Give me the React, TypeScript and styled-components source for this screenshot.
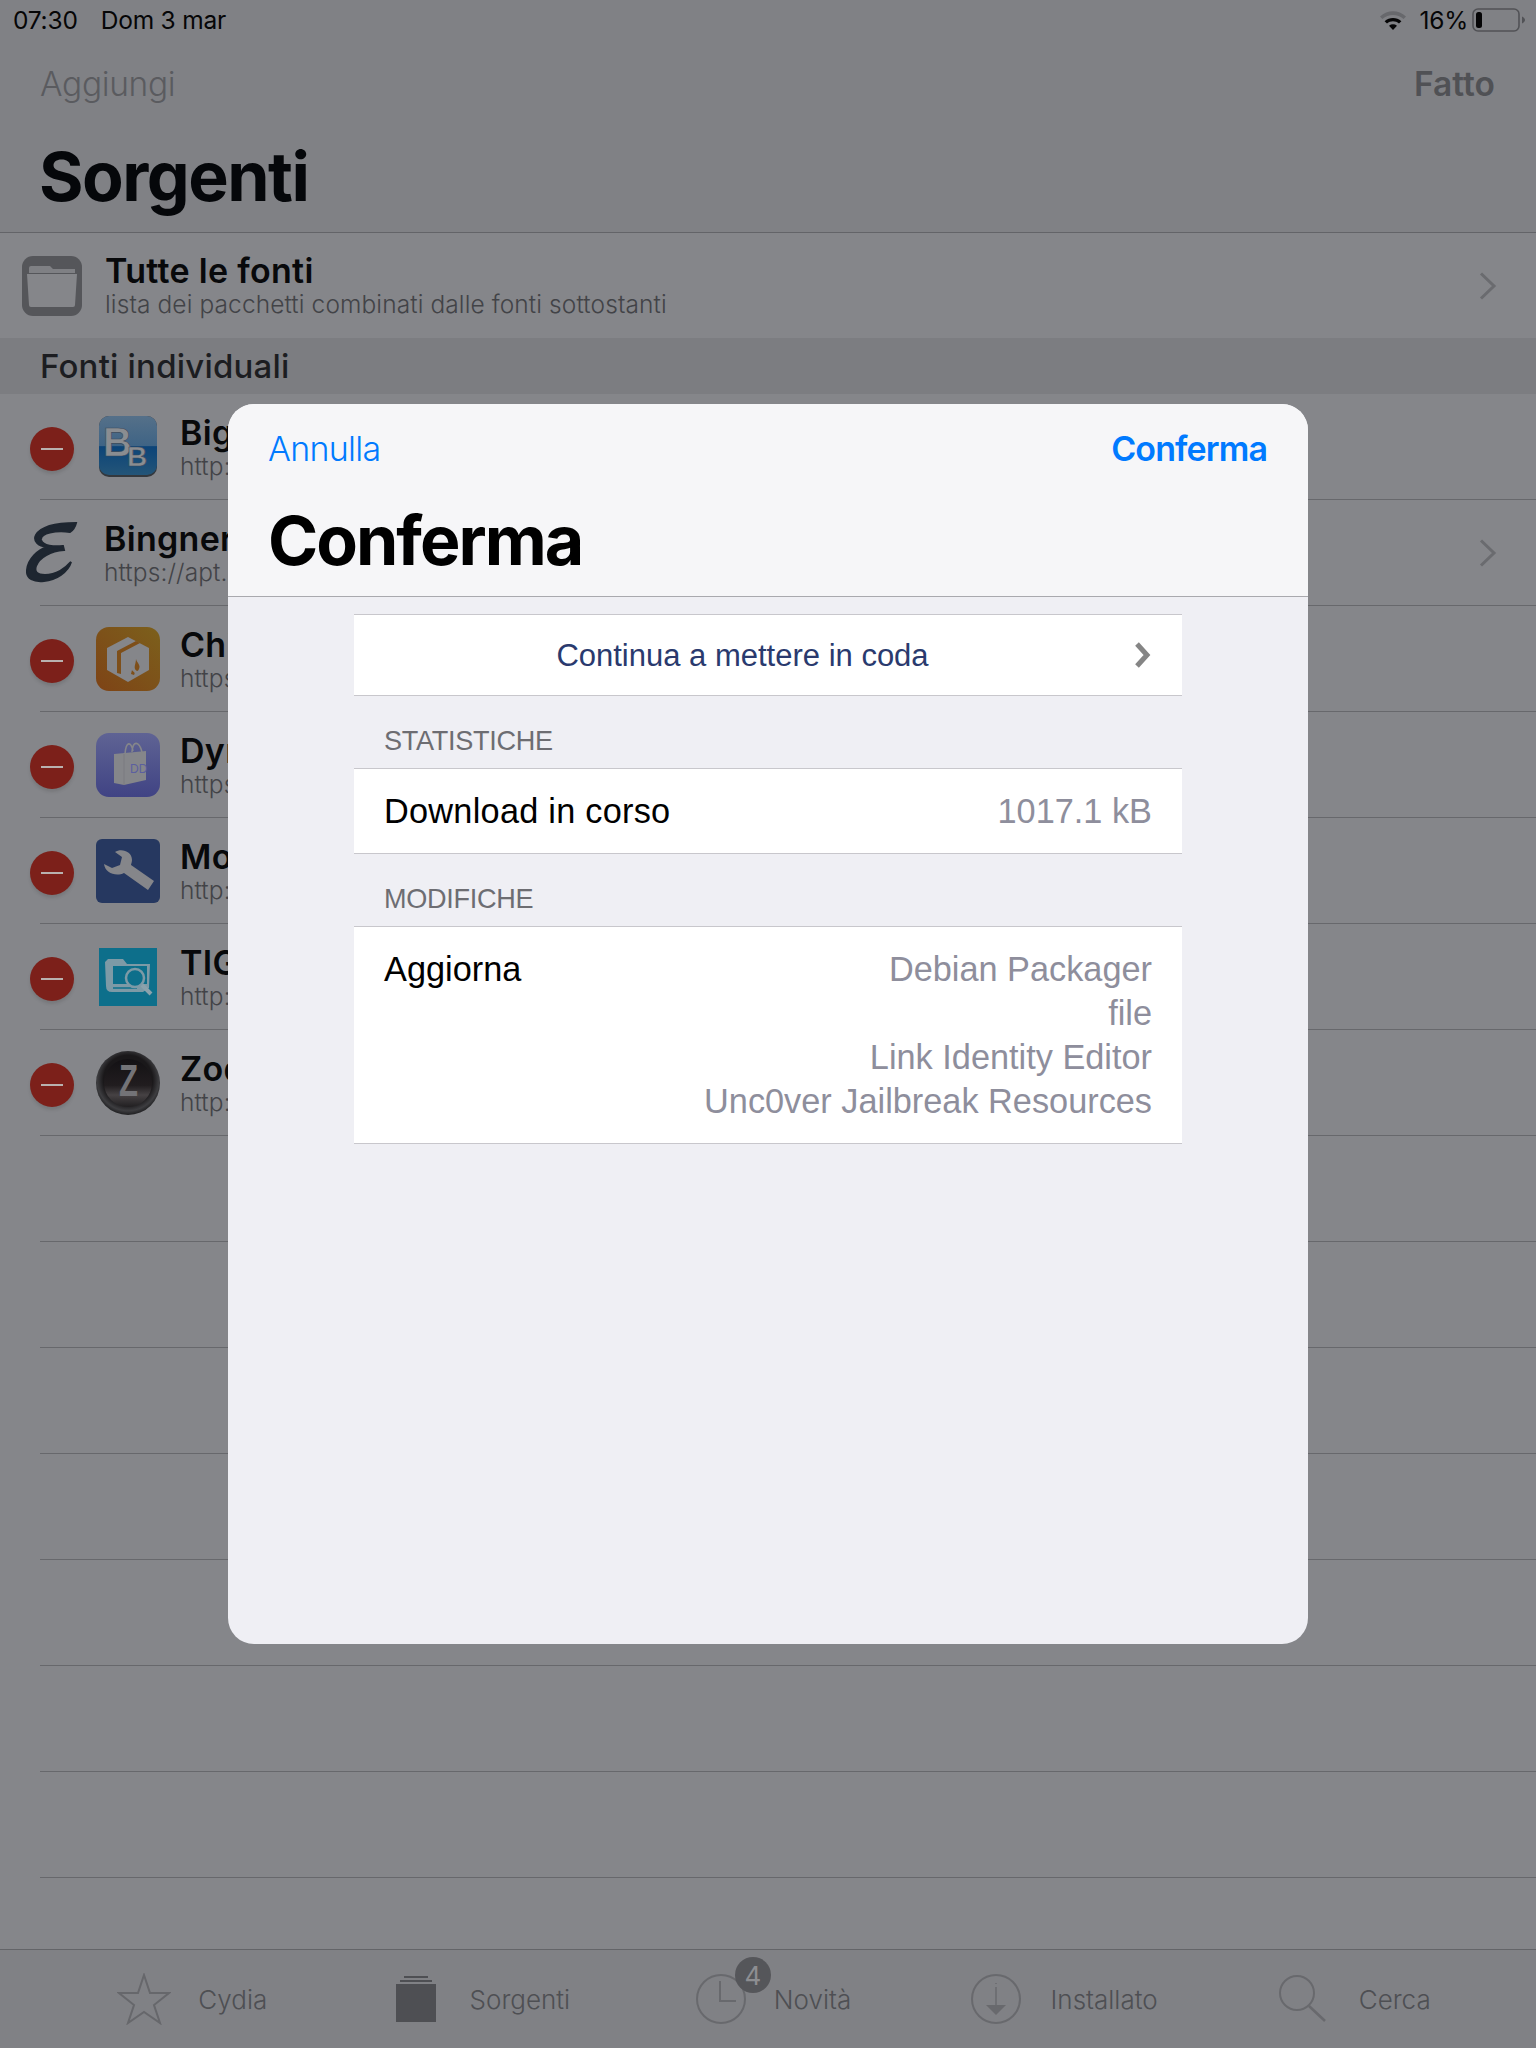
import React from 'react';
import styled, { createGlobalStyle } from 'styled-components';

const GlobalStyle = createGlobalStyle`
  html, body { margin: 0; padding: 0; background: #848589; }
  * { box-sizing: border-box; }
`;

const Page = styled.div`
  position: relative;
  width: 1536px;
  height: 2048px;
  overflow: hidden;
  display: flex;
  flex-direction: column;
  background: #85868a;
  font-family: Inter, "Liberation Sans", sans-serif;
`;

/* status bar + nav */
const TopBar = styled.header`
  height: 233px;
  flex: none;
  background: #808185;
  border-bottom: 1px solid #636468;
`;

const StatusBar = styled.div`
  height: 40px;
  padding: 0 10px 0 13px;
  display: flex;
  align-items: center;
  color: #060607;
  font-size: 24.5px;
  letter-spacing: -0.2px;
`;

const StatusDate = styled.span`
  margin-left: 23px;
`;

const StatusRight = styled.div`
  margin-left: auto;
  display: flex;
  align-items: center;
`;

const Percent = styled.span`
  margin: 0 4px 0 12px;
`;

const NavRow = styled.div`
  height: 88px;
  padding: 0 41px 0 40px;
  display: flex;
  align-items: center;
  justify-content: space-between;
  font-size: 33.5px;
`;

const NavAdd = styled.span`
  color: #5a5b5f;
  font-weight: 300;
  letter-spacing: -0.35px;
`;

const NavDone = styled.span`
  color: #505155;
  font-weight: 600;
`;

const PageTitle = styled.h1`
  margin: 10px 0 0 39px;
  font-size: 68px;
  line-height: 76px;
  font-weight: 700;
  letter-spacing: -1.5px;
  color: #05070a;
`;

const AllRow = styled.div`
  height: 105px;
  flex: none;
  padding: 0 40px 0 22px;
  display: flex;
  align-items: center;
  color: #08090b;
`;

const RowText = styled.div`
  flex: 1;
  min-width: 0;
  white-space: nowrap;
`;

const RowTitle = styled.div`
  font-size: 34px;
  line-height: 38px;
  font-weight: 600;
  letter-spacing: 0.3px;
  color: #08090b;
`;

const RowSub = styled.div`
  font-size: 24.5px;
  line-height: 29px;
  font-weight: 300;
  color: #424347;
  letter-spacing: 0.1px;
`;

const SectionHead = styled.div`
  height: 56px;
  flex: none;
  padding-left: 40px;
  display: flex;
  align-items: center;
  background: #7c7d81;
  color: #1c1d21;
  font-size: 33px;
  font-weight: 500;
  letter-spacing: 0.2px;
`;

const SourceList = styled.div`
  flex: 1;
  min-height: 0;
  overflow: hidden;
`;

const Row = styled.div`
  height: 106px;
  padding: 0 40px 0 30px;
  display: flex;
  align-items: center;
  background: linear-gradient(#67686c, #67686c) no-repeat 40px 100% / 100% 1px;
`;

const PlainRow = styled(Row)`
  padding-left: 26px;
`;

const DeleteDot = styled.span`
  width: 44px;
  height: 44px;
  flex: none;
  margin: 4px 22px 0 0;
  border-radius: 50%;
  background: #7c201a;
  box-shadow: 0 3px 3px rgba(60, 60, 60, 0.18);
  display: flex;
  align-items: center;
  justify-content: center;

  &::before {
    content: '';
    width: 22px;
    height: 2px;
    background: #b9b1af;
  }
`;

const IconSlot = styled.span`
  width: 64px;
  height: 64px;
  flex: none;
  margin-right: 20px;
  display: flex;
  align-items: center;
  justify-content: center;
`;

const LogoSlot = styled.span`
  width: 52px;
  height: 62px;
  flex: none;
  margin-right: 26px;
  display: flex;
  align-items: center;
`;

const Chevron = styled.svg`
  width: 18px;
  height: 28px;
  flex: none;
  margin-right: -1px;
`;

/* tab bar */
const TabBar = styled.nav`
  height: 99px;
  flex: none;
  padding: 0 36px 0 47px;
  display: grid;
  grid-template-columns: repeat(5, 1fr);
  background: #808185;
  border-top: 1px solid #636468;
`;

const TabItem = styled.div<{ $gap: number }>`
  position: relative;
  display: flex;
  align-items: center;
  justify-content: center;
  gap: ${p => p.$gap}px;
  color: #4e4f53;
  font-size: 26px;
  font-weight: 300;
`;

const ClockWrap = styled.span`
  position: relative;
  display: flex;
`;

const TabBadge = styled.span`
  position: absolute;
  top: -17px;
  right: -25px;
  width: 36px;
  height: 36px;
  border-radius: 50%;
  background: #55565a;
  color: #8d8e92;
  font-size: 26px;
  font-weight: 400;
  display: flex;
  align-items: center;
  justify-content: center;
`;

/* modal */
const Sheet = styled.section`
  position: absolute;
  top: 404px;
  left: 228px;
  width: 1080px;
  height: 1240px;
  border-radius: 26px;
  overflow: hidden;
  display: flex;
  flex-direction: column;
  background: #efeff4;
`;

const SheetHead = styled.header`
  height: 193px;
  flex: none;
  padding: 0 41px 0 40px;
  background: #f6f6f8;
  border-bottom: 1px solid #a9a9ae;
`;

const SheetActions = styled.div`
  height: 88px;
  display: flex;
  align-items: center;
  justify-content: space-between;
  font-size: 34px;
  color: #007aff;
`;

const Cancel = styled.span`
  font-weight: 300;
  letter-spacing: -0.7px;
`;

const Confirm = styled.span`
  font-weight: 600;
  letter-spacing: -0.9px;
`;

const SheetTitle = styled.h2`
  margin: 10px 0 0;
  font-size: 68px;
  line-height: 76px;
  font-weight: 700;
  letter-spacing: -2px;
  color: #000;
`;

const SheetBody = styled.div`
  flex: 1;
  padding: 17px 126px 0;
  font-family: "Liberation Sans", Arial, sans-serif;
`;

const Card = styled.div<{ $height: number }>`
  height: ${p => p.$height}px;
  padding: 0 30px;
  display: flex;
  background: #fff;
  border-top: 1px solid #c8c7cc;
  border-bottom: 1px solid #c8c7cc;
  font-size: 34.3px;
  color: #000;
`;

const QueueCard = styled(Card)`
  position: relative;
  align-items: center;
  justify-content: center;
  padding-top: 2px;
  padding-right: 81px;
  font-size: 31px;
  color: #2a3a6e;
`;

const QueueChevron = styled.svg`
  position: absolute;
  right: 30px;
  top: 26px;
  width: 18px;
  height: 28px;
`;

const InfoCard = styled(Card)`
  align-items: center;
  justify-content: space-between;
`;

const InfoLabel = styled.span`
  letter-spacing: 0.25px;
`;

const ChangesCard = styled(Card)`
  justify-content: space-between;
  padding-top: 20px;
`;

const ChangeLabel = styled.span`
  line-height: 44px;
`;

const Muted = styled.span`
  color: #8e8e9c;
`;

const ChangeList = styled.div`
  display: flex;
  flex-direction: column;
  align-items: flex-end;
  line-height: 44px;
  color: #8e8e9c;
`;

const GroupLabel = styled.div<{ $top: number }>`
  height: 27px;
  margin: ${p => p.$top}px 0 14px 30px;
  display: flex;
  align-items: center;
  font-size: 27.1px;
  letter-spacing: -0.3px;
  color: #6d6d72;
`;

const ArrowRight = () => (
  <Chevron viewBox="0 0 18 28">
    <path d="M2 1.5 L15 14 L2 26.5" fill="none" stroke="#6a6b6f" strokeWidth="3" />
  </Chevron>
);

const WifiIcon = () => (
  <svg width="28" height="22" viewBox="0 0 28 22">
    <path d="M1 7.5 C8.5 0.5 19.5 0.5 27 7.5 L24.6 10 C18.5 4.6 9.5 4.6 3.4 10 Z" fill="#67686c" />
    <path d="M5.6 12.2 C10.4 7.8 17.6 7.8 22.4 12.2 L20 14.6 C16.6 11.6 11.4 11.6 8 14.6 Z" fill="#050506" />
    <path d="M10 16.7 C12.4 14.8 15.6 14.8 18 16.7 L14 21 Z" fill="#050506" />
  </svg>
);

const BatteryIcon = () => (
  <svg width="54" height="26" viewBox="0 0 54 26">
    <rect x="1" y="2" width="46" height="22" rx="5" fill="none" stroke="#515256" strokeWidth="1.6" />
    <rect x="4" y="5" width="6" height="16" rx="2.5" fill="#050506" />
    <path d="M50 9.5 C52 10.5 53 11.8 53 13 C53 14.2 52 15.5 50 16.5 Z" fill="#515256" />
  </svg>
);

const FolderIcon = () => (
  <svg width="60" height="60" viewBox="0 0 60 60" style={{ marginRight: 23, flex: 'none' }}>
    <rect width="60" height="60" rx="11" fill="#55565a" />
    <path d="M7 12 Q7 10 9 10 H28 L31 13 H53 V17 H7 Z" fill="#7f8084" />
    <path d="M5 18 H55 L53 49 Q53 51 51 51 H9 Q7 51 7 49 Z" fill="#85868a" />
  </svg>
);

const BigBossIcon = () => (
  <svg width="58" height="62" viewBox="0 0 58 62">
    <defs>
      <linearGradient id="bbTop" x1="0" y1="0" x2="0" y2="1">
        <stop offset="0" stopColor="#557089" />
        <stop offset="0.5" stopColor="#3f6485" />
        <stop offset="0.52" stopColor="#0c4478" />
        <stop offset="1" stopColor="#245578" />
      </linearGradient>
    </defs>
    <rect width="58" height="61" rx="10" fill="#34383d" />
    <rect width="58" height="59" rx="10" fill="url(#bbTop)" />
    <text x="4" y="40" fontFamily="Liberation Sans" fontWeight="700" fontSize="40" fill="#8a8d91" stroke="#3a4a5c" strokeWidth="0.6">B</text>
    <text x="28" y="50" fontFamily="Liberation Sans" fontWeight="700" fontSize="28" fill="#8a8d91" stroke="#3a4a5c" strokeWidth="0.6">B</text>
  </svg>
);

const ElucubratusLogo = () => (
  <svg width="52" height="62" viewBox="0 0 52 62">
    <path
      d="M50 1 C36 1 16 3 10 13 C7 19 12 24 21 25 C12 28 2 37 1 48 C0 57 8 60 18 59 C30 58 42 50 45 40 C40 46 30 53 19 53 C11 53 8 50 10 44 C13 35 25 29 38 28 L37 24 C28 25 17 24 15 18 C14 11 30 8 44 10 C47 8 49 5 50 1 Z"
      fill="#1e2630"
      stroke="#1e2630"
      strokeWidth="2"
    />
  </svg>
);

const ChimeraIcon = () => (
  <svg width="64" height="64" viewBox="0 0 64 64">
    <defs>
      <linearGradient id="chi" x1="0" y1="1" x2="1" y2="0">
        <stop offset="0" stopColor="#7e4316" />
        <stop offset="1" stopColor="#7c601c" />
      </linearGradient>
    </defs>
    <rect width="64" height="64" rx="13" fill="url(#chi)" />
    <path d="M32 10 L53 21 L53 43 L32 55 L11 43 L11 21 Z" fill="#85868a" />
    <path d="M21 46 L21 24 L40 14 L44 16 L25 26 L25 47 Z" fill="#7e4f1a" />
    <path d="M40 32 C41 36 45 38 43 42 C42 45 40 44 39 42 C38 39 40 36 40 32 Z M36 43 C37 45 40 45 38 48 L35 47 Z" fill="#7e4f1a" />
  </svg>
);

const DynasticIcon = () => (
  <svg width="64" height="64" viewBox="0 0 64 64">
    <defs>
      <linearGradient id="dyn" x1="0" y1="0" x2="0" y2="1">
        <stop offset="0" stopColor="#5f6394" />
        <stop offset="1" stopColor="#404384" />
      </linearGradient>
    </defs>
    <rect width="64" height="64" rx="13" fill="url(#dyn)" />
    <path d="M18 21 L50 18 L50 47 L28 52 L18 50 Z" fill="#85868a" />
    <path d="M28 21 V52" stroke="#7a7b80" strokeWidth="1" />
    <path d="M29 21 C30 8 35 8 37 18 M36 19 C37 7 43 8 46 19" fill="none" stroke="#85868a" strokeWidth="1.6" />
    <text x="34" y="40" fontFamily="Liberation Sans" fontSize="12" fill="#5b5fa0">DD</text>
  </svg>
);

const ModMyIcon = () => (
  <svg width="64" height="64" viewBox="0 0 64 64">
    <rect width="64" height="64" rx="6" fill="#263860" />
    <path
      d="M19 13 C25 9 36 12 36 21 C36 23 35 25 35 26 L58 42 L52 51 L28 34 C20 38 9 34 8 25 L16 29 L24 26 L26 18 Z"
      fill="#85868a"
    />
  </svg>
);

const TigiIcon = () => (
  <svg width="58" height="58" viewBox="0 0 58 58">
    <rect width="58" height="58" fill="#0d6f8b" />
    <path d="M6 14 L7 38 Q7 44 13 44 H44 L50 40 L51 16 H28 L24 11 H9 Z" fill="#7d9aa6" />
    <rect x="14" y="18" width="34" height="18" fill="#0d6f8b" />
    <path d="M14 40 H38" stroke="#0d6f8b" strokeWidth="1.5" />
    <circle cx="36" cy="30" r="9" fill="#0d6f8b" stroke="#7d9aa6" strokeWidth="2.5" />
    <path d="M43 37 L52 46" stroke="#8ba2ac" strokeWidth="4" />
  </svg>
);

const ZodIcon = () => (
  <svg width="64" height="64" viewBox="0 0 64 64">
    <defs>
      <radialGradient id="zodRing" cx="0.5" cy="0.45" r="0.55">
        <stop offset="0.7" stopColor="#1a181a" />
        <stop offset="0.88" stopColor="#3d3d40" />
        <stop offset="1" stopColor="#1f1f21" />
      </radialGradient>
      <linearGradient id="zodCore" x1="0" y1="0" x2="0" y2="1">
        <stop offset="0" stopColor="#131114" />
        <stop offset="0.55" stopColor="#211d1f" />
        <stop offset="0.75" stopColor="#464244" />
        <stop offset="1" stopColor="#211f21" />
      </linearGradient>
    </defs>
    <circle cx="32" cy="32" r="32" fill="url(#zodRing)" />
    <circle cx="32" cy="32" r="24" fill="url(#zodCore)" />
    <text
      x="23"
      y="45"
      fontFamily="Liberation Sans"
      fontWeight="700"
      fontSize="45"
      textLength="19"
      lengthAdjust="spacingAndGlyphs"
      fill="#737377"
    >
      Z
    </text>
  </svg>
);

const StarIcon = () => (
  <svg width="54" height="52" viewBox="0 0 54 52">
    <path d="M27 2 L33 20 L52 20 L37 32 L43 50 L27 39 L11 50 L17 32 L2 20 L21 20 Z" fill="none" stroke="#66676b" strokeWidth="2" />
  </svg>
);

const StackIcon = () => (
  <svg width="40" height="46" viewBox="0 0 40 46">
    <rect x="8" y="0" width="24" height="2" fill="#4e4f53" />
    <rect x="4" y="4" width="32" height="2" fill="#4e4f53" />
    <rect x="0" y="8" width="40" height="38" fill="#4e4f53" />
  </svg>
);

const ClockIcon = () => (
  <svg width="50" height="50" viewBox="0 0 50 50">
    <circle cx="25" cy="25" r="24" fill="none" stroke="#68696d" strokeWidth="2" />
    <path d="M24 7 V27 H40" fill="none" stroke="#68696d" strokeWidth="2" />
  </svg>
);

const InstalledIcon = () => (
  <svg width="50" height="50" viewBox="0 0 50 50">
    <circle cx="25" cy="25" r="24" fill="none" stroke="#68696d" strokeWidth="2" />
    <path d="M25 9 V10 M25 13 V32" stroke="#68696d" strokeWidth="1.5" />
    <path d="M15 31 H35 L25 41 Z" fill="#68696d" />
  </svg>
);

const SearchIcon = () => (
  <svg width="48" height="48" viewBox="0 0 48 48">
    <circle cx="18" cy="18" r="17" fill="none" stroke="#68696d" strokeWidth="2" />
    <path d="M30 31 L46 46" stroke="#68696d" strokeWidth="2.6" />
  </svg>
);

const sources = [
  { title: 'BigBoss', url: 'http://apt.thebigboss.org/repofiles/cydia/', icon: <BigBossIcon /> },
  { title: 'Chimera', url: 'https://repo.chariz.io/', icon: <ChimeraIcon /> },
  { title: 'Dynastic Repo', url: 'https://repo.dynastic.co/', icon: <DynasticIcon /> },
  { title: 'ModMyi', url: 'http://apt.modmyi.com/', icon: <ModMyIcon /> },
  { title: 'TIGI Software', url: 'http://tigisoftware.com/cydia/', icon: <TigiIcon /> },
  { title: 'ZodTTD & MacCiti', url: 'http://cydia.zodttd.com/repo/cydia/', icon: <ZodIcon /> },
];

export default function App() {
  return (
    <Page>
      <GlobalStyle />
      <TopBar>
        <StatusBar>
          <span>07:30</span>
          <StatusDate>Dom 3 mar</StatusDate>
          <StatusRight>
            <WifiIcon />
            <Percent>16%</Percent>
            <BatteryIcon />
          </StatusRight>
        </StatusBar>
        <NavRow>
          <NavAdd>Aggiungi</NavAdd>
          <NavDone>Fatto</NavDone>
        </NavRow>
        <PageTitle>Sorgenti</PageTitle>
      </TopBar>

      <AllRow>
        <FolderIcon />
        <RowText>
          <RowTitle>Tutte le fonti</RowTitle>
          <RowSub>lista dei pacchetti combinati dalle fonti sottostanti</RowSub>
        </RowText>
        <ArrowRight />
      </AllRow>
      <SectionHead>Fonti individuali</SectionHead>

      <SourceList>
        <Row>
          <DeleteDot />
          <IconSlot>{sources[0].icon}</IconSlot>
          <RowText>
            <RowTitle>{sources[0].title}</RowTitle>
            <RowSub>{sources[0].url}</RowSub>
          </RowText>
        </Row>
        <PlainRow>
          <LogoSlot>
            <ElucubratusLogo />
          </LogoSlot>
          <RowText>
            <RowTitle>Bingner/Elucubratus</RowTitle>
            <RowSub>https://apt.bingner.com/</RowSub>
          </RowText>
          <ArrowRight />
        </PlainRow>
        {sources.slice(1).map(s => (
          <Row key={s.title}>
            <DeleteDot />
            <IconSlot>{s.icon}</IconSlot>
            <RowText>
              <RowTitle>{s.title}</RowTitle>
              <RowSub>{s.url}</RowSub>
            </RowText>
          </Row>
        ))}
        {Array.from({ length: 7 }, (_, i) => (
          <Row key={i} />
        ))}
      </SourceList>

      <TabBar>
        <TabItem $gap={27}>
          <StarIcon />
          <span>Cydia</span>
        </TabItem>
        <TabItem $gap={34}>
          <StackIcon />
          <span>Sorgenti</span>
        </TabItem>
        <TabItem $gap={28}>
          <ClockWrap>
            <ClockIcon />
            <TabBadge>4</TabBadge>
          </ClockWrap>
          <span>Novità</span>
        </TabItem>
        <TabItem $gap={30}>
          <InstalledIcon />
          <span>Installato</span>
        </TabItem>
        <TabItem $gap={32}>
          <SearchIcon />
          <span>Cerca</span>
        </TabItem>
      </TabBar>

      <Sheet>
        <SheetHead>
          <SheetActions>
            <Cancel>Annulla</Cancel>
            <Confirm>Conferma</Confirm>
          </SheetActions>
          <SheetTitle>Conferma</SheetTitle>
        </SheetHead>
        <SheetBody>
          <QueueCard $height={82}>
            Continua a mettere in coda
            <QueueChevron viewBox="0 0 18 28">
              <path d="M3 3 L13 14 L3 25" fill="none" stroke="#858585" strokeWidth="5" />
            </QueueChevron>
          </QueueCard>
          <GroupLabel $top={31}>STATISTICHE</GroupLabel>
          <InfoCard $height={86}>
            <InfoLabel>Download in corso</InfoLabel>
            <Muted>1017.1 kB</Muted>
          </InfoCard>
          <GroupLabel $top={31}>MODIFICHE</GroupLabel>
          <ChangesCard $height={218}>
            <ChangeLabel>Aggiorna</ChangeLabel>
            <ChangeList>
              <span>Debian Packager</span>
              <span>file</span>
              <span>Link Identity Editor</span>
              <span>Unc0ver Jailbreak Resources</span>
            </ChangeList>
          </ChangesCard>
        </SheetBody>
      </Sheet>
    </Page>
  );
}
